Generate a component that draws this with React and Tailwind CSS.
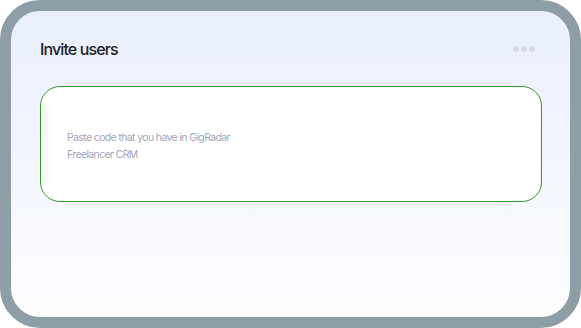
export default function App() {
  return (
    <div className="w-[581px] h-[328px] bg-white" style={{ fontFamily: 'Inter, "Noto Sans", sans-serif' }}>
      <div className="w-full h-full rounded-[40px] border-[11px] border-[#8d9ea6] bg-gradient-to-b from-[#e9effd] to-[#fdfdff] overflow-hidden">
        <div className="flex items-center justify-between pl-[29px] pr-[35px] pt-[28px]">
          <div className="text-[16px] leading-[20px] font-medium tracking-[-0.055em] text-[#1f2023]">Invite users</div>
          <div className="flex gap-[2px]">
            <div className="w-[6px] h-[6px] rounded-full bg-[#d8dce6]"></div>
            <div className="w-[6px] h-[6px] rounded-full bg-[#d8dce6]"></div>
            <div className="w-[6px] h-[6px] rounded-full bg-[#d8dce6]"></div>
          </div>
        </div>
        <div className="ml-[29px] mr-[28px] mt-[27px] h-[116px] rounded-[20px] border border-[#2e9a26] bg-white flex items-center px-[26px] pt-[3px]">
          <div className="text-[10.5px] leading-[17px] tracking-[-0.06em] text-[#a3a6b8] w-[220px]">
            Paste code that you have in GigRadar<br />Freelancer CRM
          </div>
        </div>
      </div>
    </div>
  );
}
